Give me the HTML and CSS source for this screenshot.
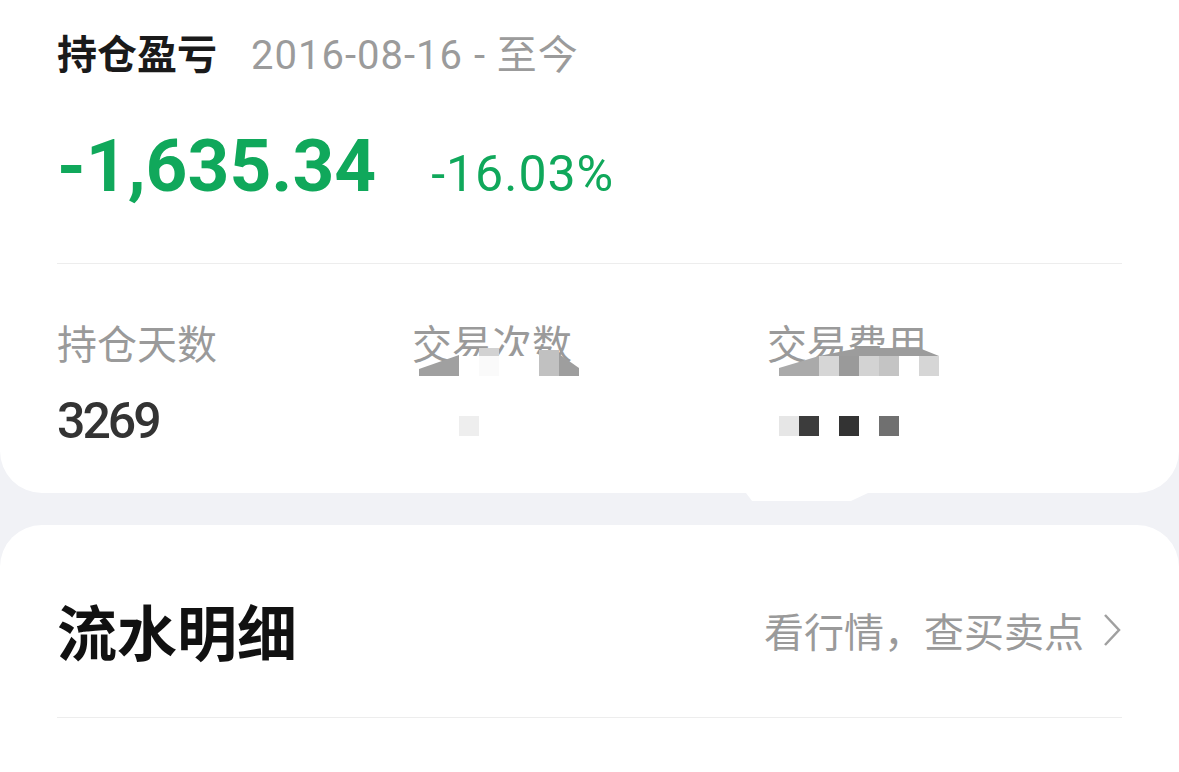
FILE: index.html
```html
<!DOCTYPE html>
<html lang="zh-CN">
<head>
  <meta charset="UTF-8" />
  <meta name="viewport" content="width=device-width, initial-scale=1.0" />
  <title>持仓盈亏</title>
  <link rel="stylesheet" href="styles.css">
</head>
<body>

  <!-- SUMMARY CARD -->
  <section class="card summary">
    <div class="summary-head">
      <h2>持仓盈亏</h2>
      <span class="period">2016-08-16 - 至今</span>
    </div>

    <div class="amount">
      <span class="amount-value">-1,635.34</span>
      <span class="amount-pct">-16.03%</span>
    </div>

    <div class="divider"></div>

    <div class="stats">
      <div class="stat">
        <div class="stat-label">持仓天数</div>
        <div class="stat-value">3269</div>
      </div>
      <div class="stat">
        <div class="stat-label">交易次数</div>
        <div class="stat-value">&nbsp;</div>
        <svg class="mosaic mosaic-count" viewBox="420 340 160 100">
          <polygon points="420,380 420,373 460,359 460,380" fill="#a0a0a0"/>
          <rect x="460" y="360" width="20" height="20" fill="#fff"/>
          <rect x="480" y="352" width="20" height="8" fill="#d2d2d2"/>
          <rect x="480" y="360" width="20" height="20" fill="#fafafa"/>
          <rect x="500" y="360" width="40" height="20" fill="#fff"/>
          <rect x="540" y="354" width="20" height="26" fill="#c1c1c1"/>
          <polygon points="560,358 580,372 580,380 560,380" fill="#9e9e9e"/>
          <rect x="460" y="420" width="20" height="20" fill="#eeeeee"/>
        </svg>
      </div>
      <div class="stat">
        <div class="stat-label">交易费用</div>
        <div class="stat-value">&nbsp;</div>
        <svg class="mosaic mosaic-fee" viewBox="780 340 160 100">
          <polygon points="820,360 860,352 920,352 940,360" fill="#9c9c9c"/>
          <polygon points="780,380 780,372 820,360 820,380" fill="#aaaaaa"/>
          <rect x="820" y="360" width="20" height="20" fill="#d6d6d6"/>
          <rect x="840" y="360" width="20" height="20" fill="#9a9a9a"/>
          <rect x="860" y="360" width="20" height="20" fill="#d3d3d3"/>
          <rect x="880" y="360" width="20" height="20" fill="#c4c4c4"/>
          <rect x="900" y="360" width="20" height="20" fill="#fff"/>
          <rect x="920" y="360" width="20" height="20" fill="#d6d6d6"/>
          <rect x="780" y="420" width="20" height="20" fill="#e6e6e6"/>
          <rect x="800" y="420" width="20" height="20" fill="#3c3c3c"/>
          <rect x="840" y="420" width="20" height="20" fill="#333"/>
          <rect x="880" y="420" width="20" height="20" fill="#707070"/>
        </svg>
      </div>
    </div>
    <div class="blob"></div>
  </section>

  <!-- DETAIL CARD -->
  <section class="card detail">
    <div class="detail-head">
      <h2>流水明细</h2>
      <a href="#" class="detail-link">
        看行情，查买卖点
        <svg viewBox="0 0 20 34"><polyline points="3,2 17,17 3,32"/></svg>
      </a>
    </div>
    <div class="divider detail-divider"></div>
  </section>

</body>
</html>
```

FILE: styles.css
```css
/* RESET */
*, *::before, *::after {
  box-sizing: border-box;
  margin: 0;
  padding: 0;
}

body {
  font-family: Roboto, "Noto Sans CJK SC", sans-serif;
  background-color: #f1f2f6;
  color: #333;
  overflow: hidden;
}

a {
  text-decoration: none;
  color: inherit;
}

.card {
  background: #fff;
  padding-left: 57px;
  padding-right: 57px;
}

.divider {
  height: 1px;
  background: #ededed;
}

/* SUMMARY */
.summary {
  position: relative;
  border-radius: 0 0 42px 42px;
  padding-top: 26px;
  padding-bottom: 42px;
}

.summary-head {
  display: flex;
  align-items: baseline;
  gap: 34px;
  line-height: 52px;
}

.summary-head h2 {
  font-family: "Noto Sans CJK SC", sans-serif;
  font-size: 40px;
  font-weight: 700;
  color: #1a1a1a;
}

.period {
  font-size: 40px;
  letter-spacing: 1px;
  color: #9b9b9b;
}

.amount {
  display: flex;
  align-items: baseline;
  margin-top: 39px;
  color: #10a85b;
  line-height: 90px;
}

.amount-value {
  font-size: 73px;
  font-weight: 700;
}

.amount-pct {
  font-size: 50px;
  letter-spacing: 1px;
  margin-left: 55px;
}

.summary .divider {
  margin-top: 44px;
}

.stats {
  display: grid;
  grid-template-columns: repeat(3, 1fr);
  padding-top: 50px;
}

.stat {
  position: relative;
}

.stat-label {
  font-family: "Noto Sans CJK SC", sans-serif;
  font-size: 40px;
  line-height: 56px;
  color: #9a9a9a;
}

.stat-value {
  margin-top: 21px;
  font-size: 50px;
  font-weight: 500;
  line-height: 60px;
  letter-spacing: -3px;
  color: #333;
}

.mosaic {
  position: absolute;
  top: 22px;
  width: 160px;
  height: 100px;
}

.mosaic-count {
  left: 7px;
}

.mosaic-fee {
  left: 12px;
}

.blob {
  position: absolute;
  left: 746px;
  bottom: -8px;
  width: 122px;
  height: 8px;
  background: #fff;
  clip-path: polygon(0 0, 100% 0, 86% 100%, 5% 100%);
}

/* DETAIL */
.detail {
  margin-top: 32px;
  border-radius: 42px 42px 0 0;
  padding-top: 65px;
  min-height: 260px;
}

.detail-head {
  display: flex;
  justify-content: space-between;
  align-items: center;
}

.detail-head h2 {
  font-family: "Noto Sans CJK SC", sans-serif;
  font-size: 60px;
  font-weight: 700;
  line-height: 80px;
  color: #111;
}

.detail-link {
  display: flex;
  align-items: center;
  gap: 18px;
  font-family: "Noto Sans CJK SC", sans-serif;
  font-size: 40px;
  line-height: 56px;
  color: #9a9a9a;
}

.detail-link svg {
  width: 20px;
  height: 34px;
  fill: none;
  stroke: #a0a0a0;
  stroke-width: 2.5;
}

.detail-divider {
  margin-top: 47px;
}
```
